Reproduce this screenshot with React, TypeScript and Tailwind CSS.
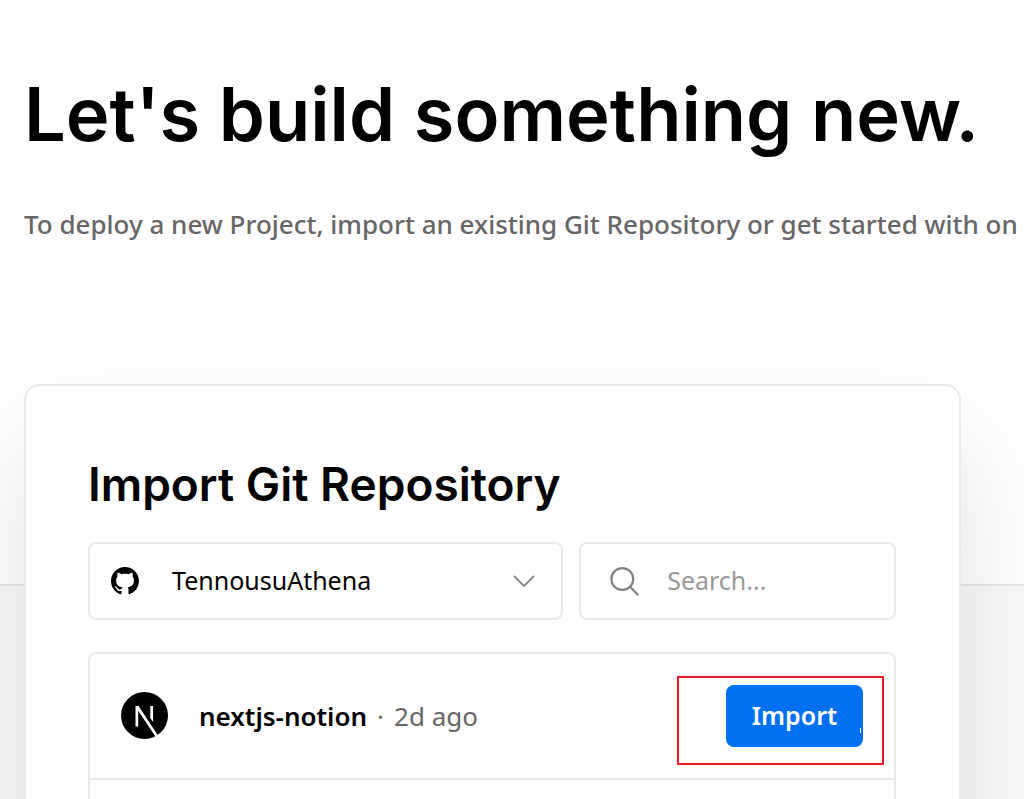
import React from "react";

function GitHubMark() {
  return (
    <svg viewBox="0 0 16 16" className="size-7" fill="currentColor" aria-hidden="true">
      <path d="M8 0C3.58 0 0 3.58 0 8c0 3.54 2.29 6.53 5.47 7.59.4.07.55-.17.55-.38 0-.19-.01-.82-.01-1.49-2.01.37-2.53-.49-2.69-.94-.09-.23-.48-.94-.82-1.13-.28-.15-.68-.52-.01-.53.63-.01 1.08.58 1.23.82.72 1.21 1.87.87 2.33.66.07-.52.28-.87.51-1.07-1.78-.2-3.64-.89-3.64-3.95 0-.87.31-1.59.82-2.15-.08-.2-.36-1.02.08-2.12 0 0 .67-.21 2.2.82.64-.18 1.32-.27 2-.27s1.36.09 2 .27c1.53-1.04 2.2-.82 2.2-.82.44 1.1.16 1.92.08 2.12.51.56.82 1.27.82 2.15 0 3.07-1.87 3.75-3.65 3.95.29.25.54.73.54 1.48 0 1.07-.01 1.93-.01 2.2 0 .21.15.46.55.38A8.01 8.01 0 0 0 16 8c0-4.42-3.58-8-8-8z" />
    </svg>
  );
}

function ChevronDown() {
  return (
    <svg viewBox="0 0 40 40" className="size-10" fill="none" stroke="#8c8c8c" strokeWidth="2" strokeLinecap="round" strokeLinejoin="round" aria-hidden="true">
      <path d="M10.5 15.5l9.500 9.500 9.500-9.500" />
    </svg>
  );
}

function SearchIcon() {
  return (
    <svg viewBox="0 0 30 30" className="size-[30px] shrink-0" fill="none" stroke="#808080" strokeWidth="2.200" strokeLinecap="round" aria-hidden="true">
      <circle cx="13.300" cy="13" r="10.900" />
      <path d="M21.100 20.800l7.400 7.700" />
    </svg>
  );
}

function NextLogo() {
  return (
    <svg viewBox="0 0 48 48" className="size-12 shrink-0" aria-hidden="true">
      <circle cx="23.500" cy="23.500" r="23.500" fill="#000" />
      <path fill="#fff" d="M14.500 14h3.100l19.400 29.600-2.200 1.400L17.200 18.800V34.500h-2.700z" />
      <path fill="#fff" d="M29.300 14h2.800v16L29.300 26z" />
    </svg>
  );
}

export default function App() {
  return (
    <div className="flex h-screen flex-col overflow-hidden bg-white font-['Noto_Sans','Liberation_Sans',sans-serif] text-black">
      <header className="h-[586px] shrink-0 border-b-2 border-[#eaeaea] px-6 pt-[66px]">
        <h1 className="whitespace-nowrap font-['Inter',sans-serif] text-[74px] leading-[96px] font-semibold">
          Let's build something new.
        </h1>
        <p className="mt-[42px] whitespace-nowrap text-[26px] leading-10 font-medium text-[#666]">
          To deploy a new Project, import an existing Git Repository or get started with on
        </p>
      </header>

      <div className="grow bg-[#fafafa] pr-[63px] pl-6">
        <main className="relative -mt-[202px] rounded-2xl border-2 border-[#eaeaea] bg-white pt-[70px] pr-[63px] pb-16 pl-[62px] shadow-[0_60px_120px_rgba(0,0,0,0.12)]">
          <h2 className="whitespace-nowrap font-['Inter',sans-serif] text-[46px] leading-14 font-semibold">
            Import Git Repository
          </h2>

          <div className="mt-[30px] grid grid-cols-[3fr_2fr] gap-4">
            <label className="relative grid h-[78px] min-w-0 items-center rounded-lg border-2 border-[#eaeaea]">
              <span className="pointer-events-none absolute left-[21px]">
                <GitHubMark />
              </span>
              <select aria-label="Git account" className="h-full w-full appearance-none bg-transparent pl-[82px] text-[25px] outline-none">
                <option>TennousuAthena</option>
              </select>
              <span className="pointer-events-none absolute right-[17px]">
                <ChevronDown />
              </span>
            </label>
            <label className="flex h-[78px] min-w-0 items-center gap-7 rounded-lg border-2 border-[#eaeaea] pr-4 pl-7">
              <SearchIcon />
              <input type="search" aria-label="Search repositories" placeholder="Search..." className="min-w-0 grow bg-transparent text-[25px] outline-none placeholder:text-[#999]" />
            </label>
          </div>

          <ul className="mt-8 rounded-lg border-2 border-[#eaeaea]">
            <li className="flex h-[126px] items-center border-b-2 border-[#eaeaea] px-[31px]">
              <NextLogo />
              <p className="ml-[30px] flex items-center gap-2.5 text-[26px] leading-10">
                <span className="font-semibold">nextjs-notion</span>
                <span className="text-[#666]">·</span>
                <span className="text-[#666]">2d ago</span>
              </p>
              <div className="relative ml-auto">
                <button type="button" className="relative h-[62px] w-[137px] rounded-lg bg-[#0070f3] text-[25px] font-semibold text-white">
                  Import
                  <span className="absolute right-0.5 bottom-3.5 h-[5px] w-px bg-white" />
                </button>
                <span className="pointer-events-none absolute -top-[9px] -right-[21px] -bottom-[18px] -left-[49px] border-2 border-[#ed1c24]" />
              </div>
            </li>
            <li className="h-[300px]" />
          </ul>
        </main>
      </div>
    </div>
  );
}
